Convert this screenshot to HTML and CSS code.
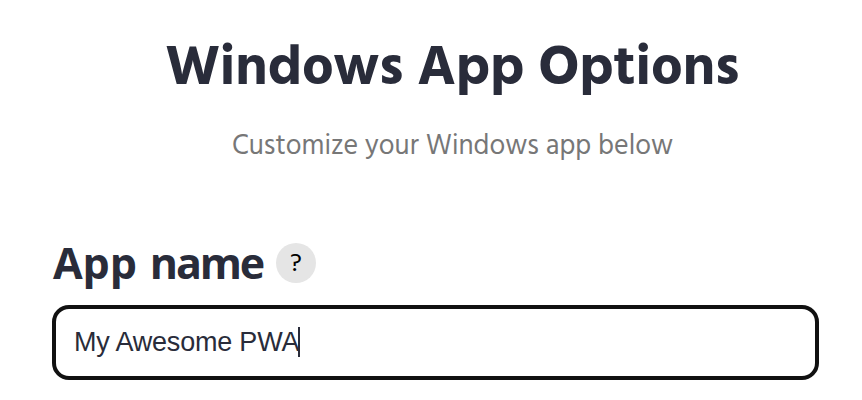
FILE: index.html
```html
<!DOCTYPE html>
<html lang="en">
<head>
<meta charset="utf-8">
<title>Windows App Options</title>
<link rel="stylesheet" href="styles.css">
</head>
<body>
<main class="options">
  <header class="heading">
    <h1 class="title">Windows App Options</h1>
    <p class="subtitle">Customize your Windows app below</p>
  </header>
  <section class="field">
    <div class="label-row">
      <h2 class="label">App <span class="tight">name</span></h2>
      <button class="help" type="button">?</button>
    </div>
    <div class="input"><span class="value">My Awesome PWA</span><span class="caret"></span></div>
  </section>
</main>
</body>
</html>
```
FILE: styles.css
```css
* { box-sizing: border-box; }
body { margin: 0; background: #fff; color: #292c3a; font-family: Hind, "Noto Sans", sans-serif; }
.options { width: 862px; height: 400px; padding: 35px 43px 0 52px; overflow: hidden; }
.heading { text-align: center; padding-left: 34px; }
.title { margin: 0; font-size: 56px; line-height: 70px; font-weight: 700; white-space: nowrap; }
.subtitle { margin: 24px 0 0; font-size: 28px; line-height: 36px; color: #777; white-space: nowrap; }
.field { margin-top: 71px; }
.label-row { display: flex; align-items: center; height: 54px; gap: 12px; }
.label { margin: 0; width: 212px; padding: 0 0 1px 1px; font-family: "Open Sans", "Noto Sans", sans-serif; font-size: 43px; line-height: 54px; font-weight: 700; letter-spacing: -0.1px; word-spacing: 2px; white-space: nowrap; }
.tight { letter-spacing: -2.2px; }
.help { width: 40px; height: 40px; padding: 3px 0 0; border: 0; border-radius: 50%; background: #e5e5e5; color: #000; font: 26px/38px Hind, "Noto Sans", sans-serif; }
.input { display: flex; align-items: center; height: 75px; margin-top: 15px; padding: 0 18px 2px; border: 4px solid #111; border-radius: 17px; font: 27px/34px "Liberation Sans", sans-serif; white-space: nowrap; }
.value { letter-spacing: -0.2px; }
.caret { width: 2px; height: 30px; margin-left: -1px; background: #292c3a; }
```
